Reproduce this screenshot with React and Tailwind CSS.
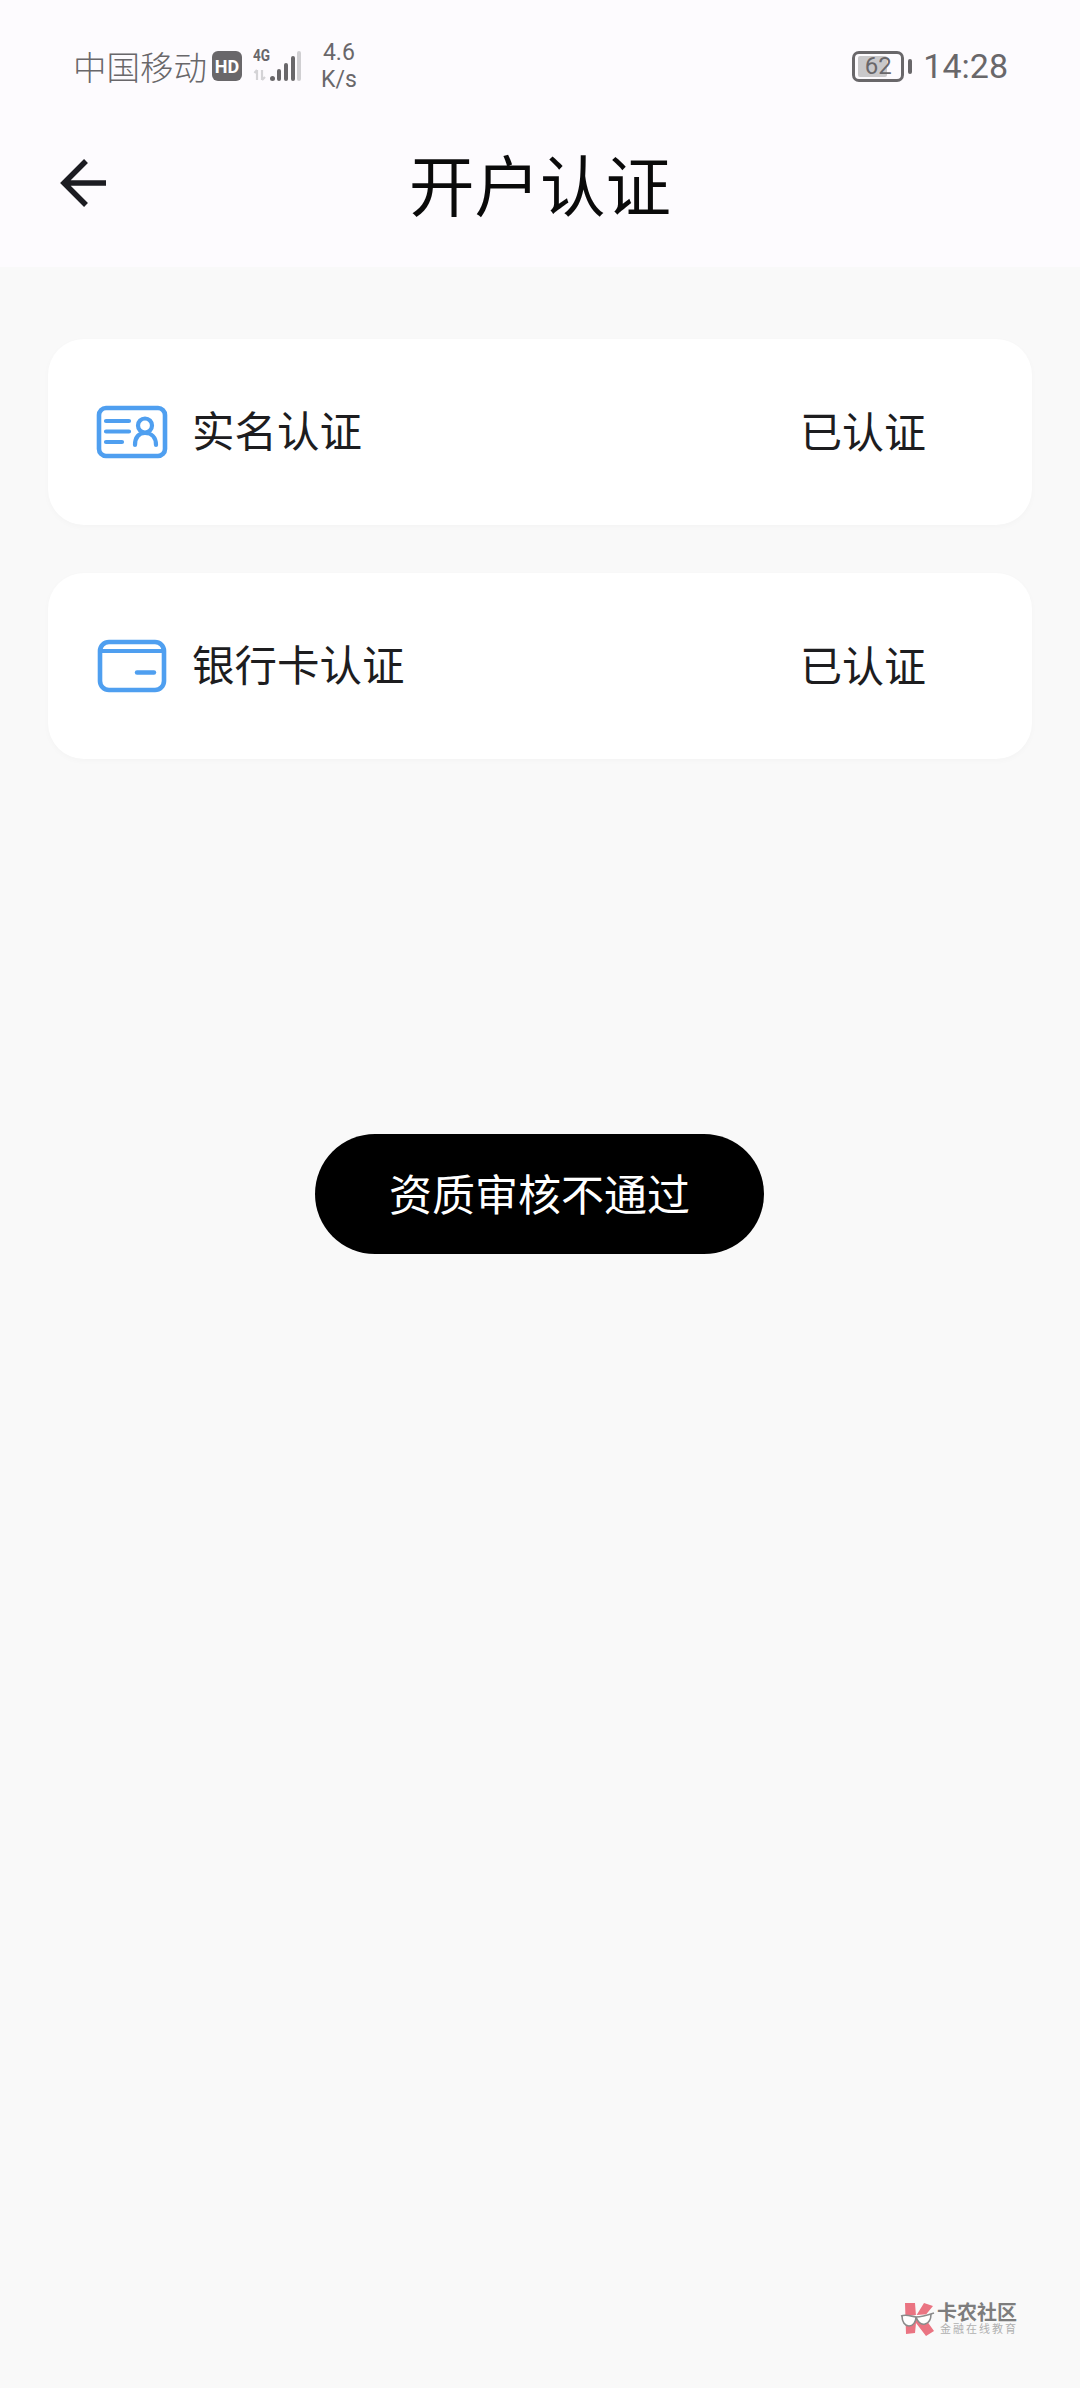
const cjk = "font-['Noto_Sans_CJK_SC','Noto_Sans',sans-serif]"

function IdCardIcon() {
  return (
    <svg className="w-[72px] h-[55px]" viewBox="0 0 72 55" fill="none" stroke="#4f9ff0" strokeLinecap="round">
      <rect x="3" y="3" width="66" height="48" rx="7" strokeWidth="4.6" />
      <path d="M10 16h23M10 26.5h23M10 37h16" strokeWidth="4.2" />
      <circle cx="49" cy="20.5" r="7" strokeWidth="4.2" />
      <path d="M39 40c0-8 4-12 10-12s11 4 11 12" strokeWidth="4.2" />
    </svg>
  )
}

function BankCardIcon() {
  return (
    <svg className="w-[72px] h-[55px]" viewBox="0 0 72 55" fill="none" stroke="#4f9ff0" strokeLinecap="round">
      <rect x="4" y="3" width="64" height="48" rx="9" strokeWidth="4.6" />
      <path d="M4 12h64" strokeWidth="4" />
      <path d="M41 33.5h17" strokeWidth="4.4" />
    </svg>
  )
}

function AuthRow({ icon, label }) {
  return (
    <div className="h-[186px] rounded-[36px] bg-white shadow-[0_2px_6px_rgba(0,0,0,0.025)] flex items-center pl-[48px] pr-[106px]">
      {icon}
      <span className={`ml-[24px] pb-[5px] text-[42.5px] leading-none text-[#1d1d1f] ${cjk}`}>{label}</span>
      <span className={`ml-auto pb-[5px] text-[42px] leading-none text-[#1d1d1f] ${cjk}`}>已认证</span>
    </div>
  )
}

function SignalIcon() {
  return (
    <div className="relative w-[50px] h-[32px] ml-[11px]">
      <span className="absolute left-0 top-[-2px] text-[16px] leading-[16px] font-bold text-[#69676a] font-['Roboto',sans-serif] scale-x-[0.85] origin-left">4G</span>
      <svg className="absolute left-0 top-0" width="50" height="32" viewBox="0 0 50 32">
        <path d="M4 30V20M1.5 23l2.5-3M9 20v10M9 30l3-3" fill="none" stroke="#d4d3d6" strokeWidth="2.2" />
        <rect x="17" y="26" width="5" height="5" rx="2.5" fill="#69676a" />
        <rect x="24" y="19" width="4" height="12" rx="2" fill="#69676a" />
        <rect x="31" y="13" width="4" height="18" rx="2" fill="#69676a" />
        <rect x="38" y="6" width="4" height="25" rx="2" fill="#69676a" />
        <rect x="44" y="1" width="4" height="30" rx="2" fill="#d0cfd2" />
      </svg>
    </div>
  )
}

function KanongLogo() {
  return (
    <svg className="w-[36px] h-[36px]" viewBox="0 0 36 36">
      <path d="M5 2h10l1 13 8-13 9 3-9 11 10 14-8 5-10-13-1 10-9 1z" fill="#ea7482" />
      <path d="M2 15c0 6 3 10 7 10s7-4 7-9c2 5 5 8 9 7s6-5 6-10" fill="#fff" stroke="#8b8b8b" strokeWidth="1.6" />
      <path d="M1 15c5-2 9 0 15 1 6 0 12-2 18-4" fill="none" stroke="#8b8b8b" strokeWidth="1.6" />
    </svg>
  )
}

export default function App() {
  return (
    <div className="relative h-[2388px] bg-[#f9f9f9] overflow-hidden">
      <header className="h-[267px] bg-[#fdfbfe]">
        {/* Status bar */}
        <div className="h-[132px] pl-[73px] pr-[72px] flex items-center text-[#69676a]">
          <span className={`text-[33.5px] leading-none font-light ${cjk}`}>中国移动</span>
          <span className="ml-[5px] w-[30px] h-[30px] rounded-[6px] bg-[#69676a] text-white flex items-center justify-center text-[18px] font-bold font-['Roboto',sans-serif]">HD</span>
          <SignalIcon />
          <div className="ml-[18px] flex flex-col items-center text-[23px] leading-[27px] font-['Roboto',sans-serif]">
            <span>4.6</span>
            <span>K/s</span>
          </div>
          <div className="ml-auto flex items-center">
            <div className="relative w-[52px] h-[31px] rounded-[7px] border-[3px] border-[#69676a] flex items-center justify-center">
              <div className="absolute left-[3px] top-[2px] bottom-[2px] w-[29px] bg-[#c9c8ca] rounded-[2px]" />
              <span className="relative text-[24px] leading-none font-['Roboto',sans-serif]">62</span>
            </div>
            <div className="ml-[4px] w-[4px] h-[15px] rounded-[2px] bg-[#69676a]" />
            <span className="ml-[11px] text-[34px] leading-none font-['Roboto',sans-serif]">14:28</span>
          </div>
        </div>
        {/* Nav bar */}
        <div className="h-[110px] px-[60px] grid grid-cols-[1fr_auto_1fr] items-center">
          <svg className="w-[48px] h-[50px] mb-[8px]" viewBox="0 0 48 50" fill="none" stroke="#1c1c22" strokeWidth="5.5">
            <path d="M46 25H4M26 3L4 25l22 22" />
          </svg>
          <h1 className={`pb-[8px] text-[65.5px] leading-none font-normal text-[#0a0a0a] ${cjk}`}>开户认证</h1>
        </div>
      </header>

      <main className="px-[48px] pt-[72px] flex flex-col gap-[48px]">
        <AuthRow icon={<IdCardIcon />} label="实名认证" />
        <AuthRow icon={<BankCardIcon />} label="银行卡认证" />
      </main>

      {/* Toast */}
      <div className={`absolute left-[315px] top-[1134px] w-[449px] h-[120px] pb-[4px] rounded-full bg-black text-white flex items-center justify-center text-[43px] leading-none ${cjk}`}>
        资质审核不通过
      </div>

      {/* Watermark */}
      <div className="absolute left-[900px] top-[2301px] flex items-start gap-[1px]">
        <KanongLogo />
        <div className={`flex flex-col ${cjk}`}>
          <span className="text-[20px] leading-[21px] font-bold text-[#7d7d7d]">卡农社区</span>
          <span className="text-[11px] leading-[13px] tracking-[2px] pl-[3px] text-[#b0b0b0]">金融在线教育</span>
        </div>
      </div>
    </div>
  )
}
